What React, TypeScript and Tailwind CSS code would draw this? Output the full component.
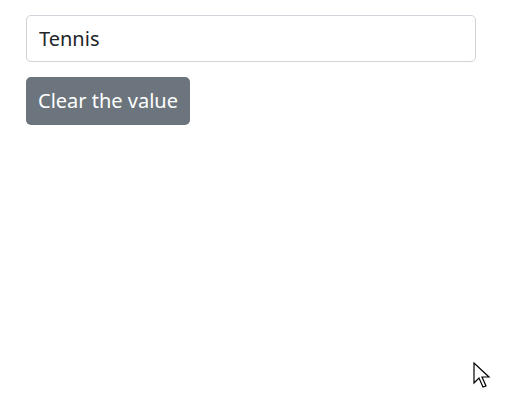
import React, { useState } from 'react';

export default function App() {
  const [value, setValue] = useState('Tennis');

  return (
    <div className="relative w-[517px] h-[401px] bg-white" style={{ fontFamily: '"Noto Sans", "Open Sans", sans-serif' }}>
      <div className="pt-[15px] pl-[26px] flex flex-col gap-[15px] items-start">
        <input
          type="text"
          value={value}
          onChange={e => setValue(e.target.value)}
          className="w-[450px] h-[47px] px-[12px] rounded-[5px] border border-[#ced4da] text-[20px] text-[#212529] outline-none"
        />
        <button
          type="button"
          onClick={() => setValue('')}
          className="h-[48px] px-[12px] rounded-[5px] bg-[#6c757d] text-white text-[20px]"
        >
          Clear the value
        </button>
      </div>
      <svg className="absolute left-[473px] top-[362px]" width="20" height="28" viewBox="0 0 20 28">
        <path d="M1 1 L1 21 L6 16 L10 25 L13 24 L9 15 L16 15 Z" fill="white" stroke="black" strokeWidth="1.2" strokeLinejoin="miter" />
      </svg>
    </div>
  );
}
